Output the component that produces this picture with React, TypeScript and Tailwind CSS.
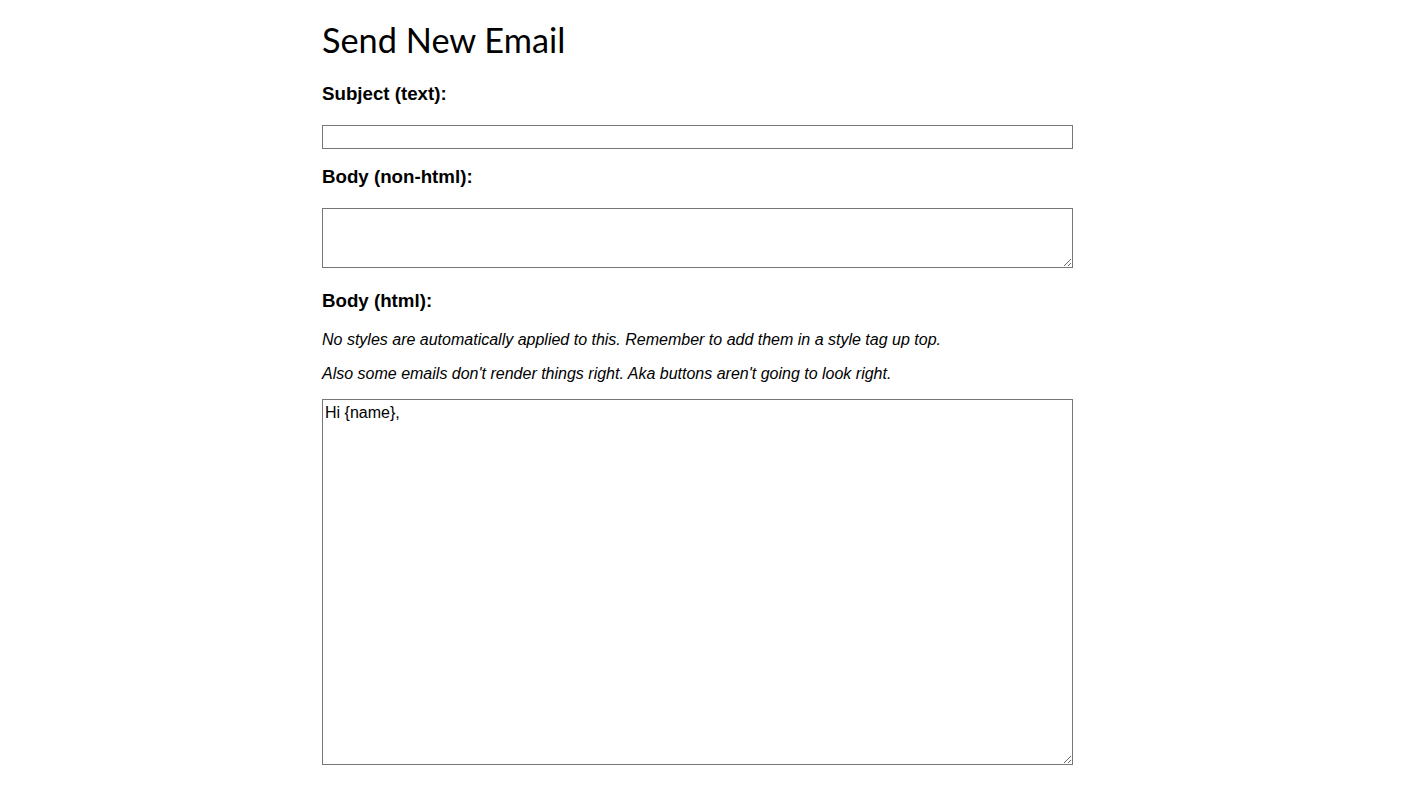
import React from "react";

export default function App() {
  return (
    <div className="min-h-[786px] bg-white text-black font-['Liberation_Sans',Arial,sans-serif]">
      <div className="ml-[322px] w-[751px] pt-[20px] flex flex-col">
        <h1 className="font-['Lato',sans-serif] text-[34.3px] leading-[40px] font-normal">
          Send New Email
        </h1>
        <h3 className="mt-[23px] text-[18.72px] leading-[22px] font-bold">Subject (text):</h3>
        <input
          type="text"
          className="mt-[20px] h-[24px] w-full border border-[#767676] px-[2px] text-[13.33px] outline-none"
        />
        <h3 className="mt-[17px] text-[18.72px] leading-[22px] font-bold">Body (non-html):</h3>
        <textarea className="mt-[20px] h-[60px] w-full border border-[#767676] p-[2px] text-[16px] outline-none resize" />
        <h3 className="mt-[22px] text-[18.72px] leading-[22px] font-bold">Body (html):</h3>
        <p className="mt-[19px] text-[16px] leading-[18px] italic">
          No styles are automatically applied to this. Remember to add them in a style tag up top.
        </p>
        <p className="mt-[16px] text-[16px] leading-[18px] italic">
          Also some emails don't render things right. Aka buttons aren't going to look right.
        </p>
        <textarea
          defaultValue="Hi {name},"
          className="mt-[16px] h-[366px] w-full border border-[#767676] px-[2px] pt-[1px] pb-0 text-[16px] leading-normal outline-none resize font-['Liberation_Sans',Arial,sans-serif]"
        />
      </div>
    </div>
  );
}
